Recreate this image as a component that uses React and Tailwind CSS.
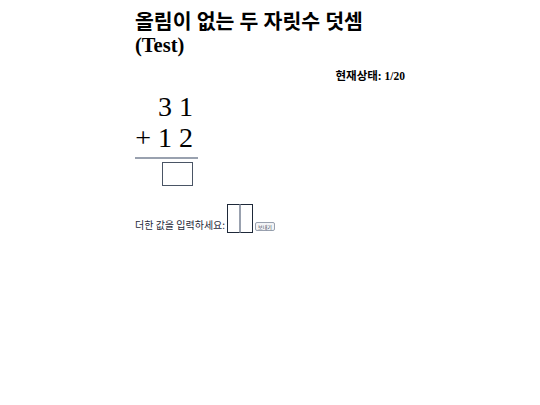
import React from 'react';

const serif = { fontFamily: '"Liberation Serif", "Noto Sans CJK KR", serif' };

export default function App() {
  return (
    <div className="min-h-[405px] bg-white text-black" style={serif}>
      <div className="mx-auto w-[270px] pt-[11px]">
        <h1 className="text-[20.5px] font-bold leading-[23px]">
          올림이 없는 두 자릿수 덧셈
          <br />
          (Test)
        </h1>

        <div className="mt-[12px] text-right text-[11.5px] font-bold leading-[14px]">현재상태: 1/20</div>

        <div className="mt-[8px] w-[63px]">
          <div className="text-right text-[28px] leading-[31px] pr-[5px]">3 1</div>
          <div className="text-right text-[28px] leading-[31px] pr-[5px]">+ 1 2</div>
          <div className="mt-[4px] h-[2px] bg-gray-400" />
          <div className="mt-[3px] ml-[27px] h-[24px] w-[31px] border border-gray-600" />
        </div>

        <div className="mt-[18px] flex items-end text-[10px] leading-[12px] text-gray-800" style={{ fontFamily: '"Noto Sans CJK KR", sans-serif' }}>
          <span className="mb-[2px]">더한 값을 입력하세요:</span>
          <div className="ml-[2px] flex">
            <div className="h-[29px] w-[13px] border border-gray-800 border-r-gray-400" />
            <div className="h-[29px] w-[13px] border border-gray-800 border-l-gray-400" />
          </div>
          <button className="ml-[2px] mb-[2px] h-[9px] rounded-[2px] border border-gray-400 bg-gray-100 px-[2px] text-[5px] leading-[7px] text-gray-700">보내기</button>
        </div>
      </div>
    </div>
  );
}
